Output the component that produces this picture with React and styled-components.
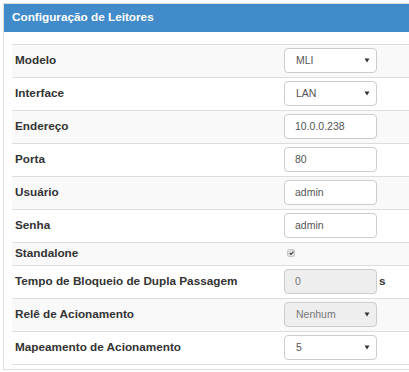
import React from 'react';
import styled, { createGlobalStyle } from 'styled-components';

const GlobalStyle = createGlobalStyle`
  html, body { margin: 0; padding: 0; background: #fff; }
  body { font-family: "Liberation Sans", Arial, sans-serif; color: #333; }
`;

const Page = styled.div`
  padding: 3px 0 0 3px;
`;

const Panel = styled.section`
  border: 1px solid #ddd;
  border-right: none;
`;

const Header = styled.header`
  background: #428bca;
  color: #fff;
  padding: 6px 8px 9px;
`;

const Title = styled.h3`
  margin: 0;
  font-size: 11.75px;
  font-weight: bold;
  line-height: 13px;
`;

const Body = styled.div`
  padding: 12px 0 4px 8px;
`;

const Table = styled.div`
  border-bottom: 1px solid #ddd;
`;

const Row = styled.div`
  display: grid;
  grid-template-columns: 272px 93px auto;
  align-items: baseline;
  border-top: 1px solid #ddd;
  padding: ${p => (p.$compact ? '2px 0 5px' : '3px 0 4px')};
  background: ${p => (p.$striped ? '#f9f9f9' : '#fff')};
`;

const Label = styled.div`
  padding-left: 3px;
  font-size: 11.75px;
  font-weight: bold;
  line-height: 15px;
  color: #333;
`;

const Field = styled.div`
  display: flex;
  align-items: center;
  box-sizing: border-box;
  height: 25px;
  border: 1px solid #ccc;
  border-radius: 4px;
  padding: ${p => (p.$select ? '0 6px 0 11px' : '0 10px')};
  font-size: 10.5px;
  line-height: 23px;
  color: ${p => (p.$disabled ? '#777' : '#555')};
  background: ${p => (p.$disabled ? '#eee' : '#fff')};
`;

const Value = styled.span`
  flex: 1;
`;

const Unit = styled.span`
  padding-left: 2px;
  font-size: 11.75px;
  font-weight: bold;
  line-height: 15px;
`;

const Check = styled.span`
  align-self: center;
  display: inline-flex;
  align-items: center;
  justify-content: center;
  margin-left: 3px;
  width: 8px;
  height: 8px;
  box-sizing: border-box;
  border-radius: 2px;
  background: #dedede;
  border: 1px solid #cacaca;
`;

const Arrow = () => (
  <svg width="6" height="5" viewBox="0 0 6 5">
    <polygon points="0.5,0.5 5.5,0.5 3,4.5" fill="#333" />
  </svg>
);

const rows = [
  { label: 'Modelo', kind: 'select', value: 'MLI' },
  { label: 'Interface', kind: 'select', value: 'LAN' },
  { label: 'Endereço', kind: 'input', value: '10.0.0.238' },
  { label: 'Porta', kind: 'input', value: '80' },
  { label: 'Usuário', kind: 'input', value: 'admin' },
  { label: 'Senha', kind: 'input', value: 'admin' },
  { label: 'Standalone', kind: 'check' },
  { label: 'Tempo de Bloqueio de Dupla Passagem', kind: 'input', value: '0', disabled: true, unit: 's' },
  { label: 'Relê de Acionamento', kind: 'select', value: 'Nenhum', disabled: true },
  { label: 'Mapeamento de Acionamento', kind: 'select', value: '5' },
];

export default function App() {
  return (
    <>
      <GlobalStyle />
      <Page>
        <Panel>
          <Header>
            <Title>Configuração de Leitores</Title>
          </Header>
          <Body>
            <Table>
              {rows.map((r, i) => (
                <Row key={r.label} $striped={i % 2 === 0} $compact={r.kind === 'check'}>
                  <Label>{r.label}</Label>
                  {r.kind === 'check' ? (
                    <Check>
                      <svg width="5" height="4" viewBox="0 0 5 4">
                        <path d="M0.6 2.1 L2 3.4 L4.5 0.6" stroke="#444" strokeWidth="1.1" fill="none" />
                      </svg>
                    </Check>
                  ) : (
                    <Field $select={r.kind === 'select'} $disabled={r.disabled}>
                      <Value>{r.value}</Value>
                      {r.kind === 'select' && <Arrow />}
                    </Field>
                  )}
                  {r.unit && <Unit>{r.unit}</Unit>}
                </Row>
              ))}
            </Table>
          </Body>
        </Panel>
      </Page>
    </>
  );
}
